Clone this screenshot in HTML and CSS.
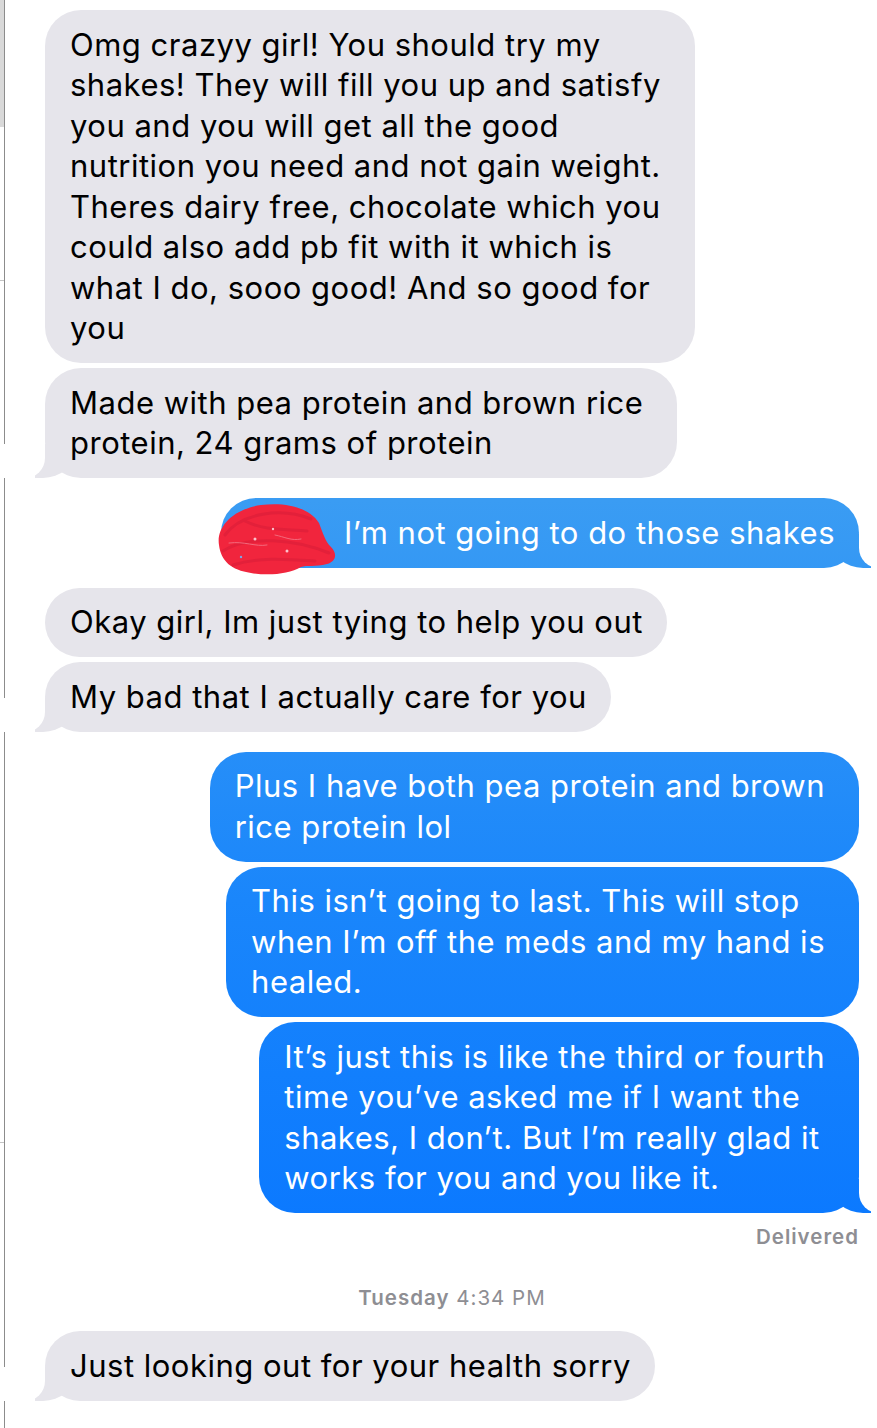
FILE: index.html
```html
<!DOCTYPE html>
<html>
<head>
<meta charset="utf-8">
<link rel="stylesheet" href="styles.css">
</head>
<body>
<div class="screen">
  <div class="rail"></div>
  <div class="thread">
    <div class="msg them multi">Omg crazyy girl! You should try my<br>shakes! They will fill you up and satisfy<br>you and you will get all the good<br>nutrition you need and not gain weight.<br>Theres dairy free, chocolate which you<br>could also add pb fit with it which is<br>what I do, sooo good! And so good for<br>you</div>
    <div class="msg them multi tail near">Made with pea protein and brown rice<br>protein, 24 grams of protein</div>

    <div class="msg me tail far"><span class="hidden-name"></span>I’m not going to do those shakes<svg class="scribble" viewBox="0 0 122 76" width="122" height="76"><path d="M4 44 C1 26 18 8 46 4 C70 1 94 6 104 22 C108 32 110 40 116 46 C122 52 122 60 112 63 C100 66 92 64 86 66 C74 73 54 75 36 72 C16 69 6 60 4 44 Z" fill="#f1253d"/><path d="M10 34 C26 12 66 6 96 18 M8 50 C34 34 80 38 114 52 M18 64 C44 56 70 58 100 60 M30 20 C50 30 70 28 92 30" fill="none" stroke="#e3203a" stroke-width="3" stroke-linecap="round"/><path d="M14 42 C30 40 40 46 52 44 M60 34 C70 36 76 40 86 38" fill="none" stroke="#f36a7c" stroke-width="1" stroke-linecap="round"/><circle cx="40" cy="38" r="1.5" fill="#fbc2cc"/><circle cx="72" cy="50" r="1.5" fill="#fbc2cc"/><circle cx="58" cy="28" r="1.2" fill="#fbc2cc"/><circle cx="26" cy="56" r="1.2" fill="#7aa6e8"/></svg></div>

    <div class="msg them far">Okay girl, Im just tying to help you out</div>
    <div class="msg them tail near">My bad that I actually care for you</div>

    <div class="msg me multi far">Plus I have both pea protein and brown<br>rice protein lol</div>
    <div class="msg me multi near">This isn’t going to last. This will stop<br>when I’m off the meds and my hand is<br>healed.</div>
    <div class="msg me multi tail near">It’s just this is like the third or fourth<br>time you’ve asked me if I want the<br>shakes, I don’t. But I’m really glad it<br>works for you and you like it.</div>

    <div class="status">Delivered</div>
    <div class="stamp"><b>Tuesday</b> 4:34 PM</div>

    <div class="msg them tail last">Just looking out for your health sorry</div>
  </div>
</div>
</body>
</html>
```

FILE: styles.css
```css
html, body {
  margin: 0;
  padding: 0;
  background: #ffffff;
}

.screen {
  display: flex;
  width: 877px;
  min-height: 1428px;
}

.rail {
  width: 4px;
  flex: none;
  border-right: 1px solid #8c8c8c;
  background:
    linear-gradient(#d9d9d9, #d9d9d9) 0 0 / 4px 127px no-repeat,
    repeating-linear-gradient(to bottom, transparent 0, transparent 280px, #c4c4c4 280px, #c4c4c4 281px, transparent 281px, transparent 431px) 0 0 / 4px 100% no-repeat;
}

.thread {
  flex: 1;
  display: flex;
  flex-direction: column;
  padding: 10px 18px 0 40px;
}

.msg {
  position: relative;
  z-index: 0;
  padding: 14.5px 24px 14.5px 25px;
  border-radius: 36px;
  font-family: Inter, "Liberation Sans", sans-serif;
  font-size: 31px;
  line-height: 40.5px;
  letter-spacing: 0.5px;
  white-space: nowrap;
}

.msg.multi {
  padding-right: 34px;
}

.them {
  align-self: flex-start;
  background: #e6e5eb;
  color: #000;
}

.me {
  align-self: flex-end;
  color: #fff;
  background: linear-gradient(to bottom, #4aa6f2 0px, #3a9cf3 500px, #1a86fb 900px, #0a78ff 1250px) fixed;
}

.near { margin-top: 5px; }
.far { margin-top: 20px; }
.last { margin-top: 21px; }

.tail::before,
.tail::after {
  content: "";
  position: absolute;
  z-index: -1;
  bottom: 0;
  height: 34px;
}

.them.tail::before {
  left: -10px;
  width: 40px;
  background: #e6e5eb;
  border-bottom-right-radius: 32px 28px;
}

.them.tail::after {
  left: -50px;
  width: 50px;
  background: #fff;
  border-bottom-right-radius: 20px;
}

.me.tail::before {
  right: -12px;
  width: 40px;
  background: linear-gradient(to bottom, #4aa6f2 0px, #3a9cf3 500px, #1a86fb 900px, #0a78ff 1250px) fixed;
  border-bottom-left-radius: 32px 28px;
}

.me.tail::after {
  right: -52px;
  width: 52px;
  background: #fff;
  border-bottom-left-radius: 20px;
}

.hidden-name {
  display: inline-block;
  width: 98px;
}

.scribble {
  position: absolute;
  left: -6px;
  top: 3px;
  z-index: 2;
}

.status {
  align-self: flex-end;
  margin-top: 12px;
  font-family: Inter, "Liberation Sans", sans-serif;
  font-weight: 600;
  font-size: 20.5px;
  line-height: 24px;
  letter-spacing: 1px;
  color: #8e8e93;
}

.stamp {
  align-self: center;
  margin-top: 37px;
  font-family: Inter, "Liberation Sans", sans-serif;
  font-size: 20.5px;
  line-height: 24px;
  letter-spacing: 1px;
  color: #8e8e93;
}

.stamp b {
  font-weight: 600;
}
```
